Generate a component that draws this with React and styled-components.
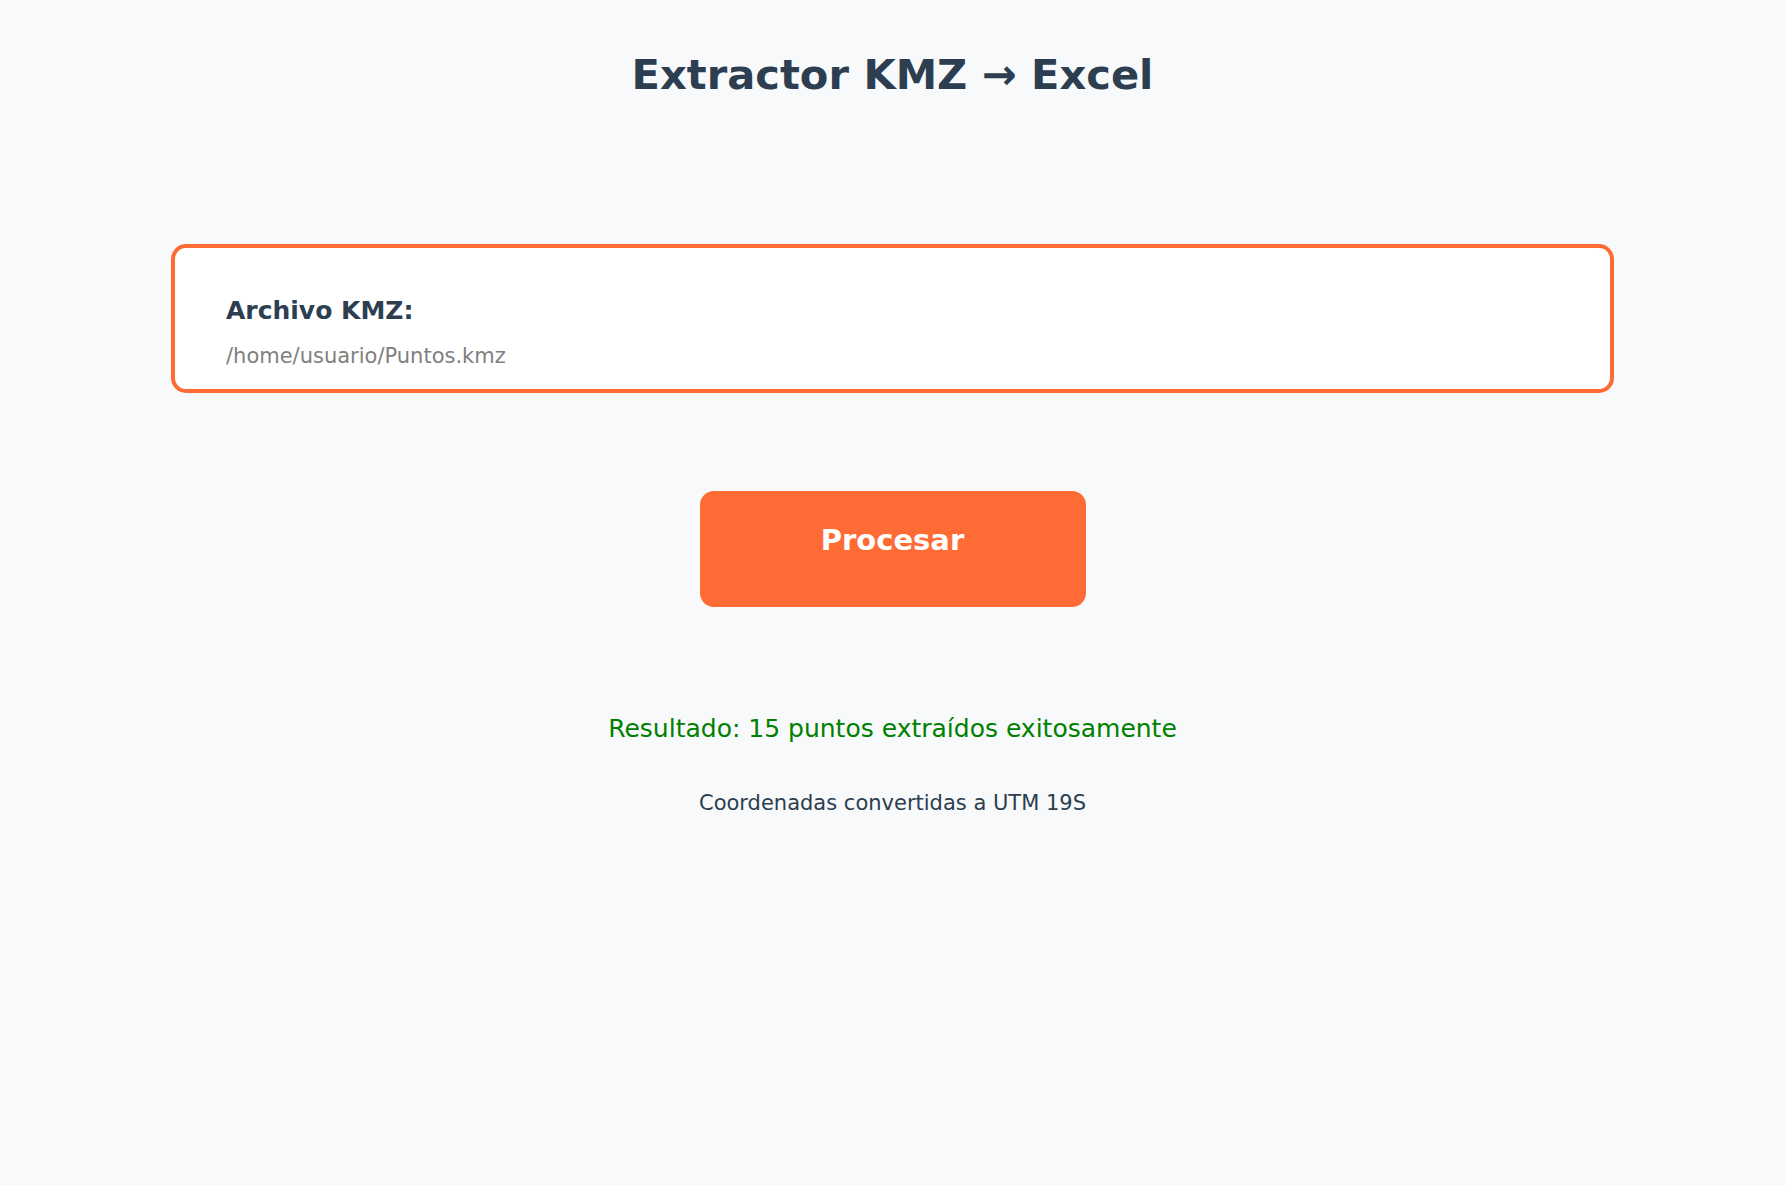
import React from 'react';
import styled, { createGlobalStyle } from 'styled-components';

const GlobalStyle = createGlobalStyle`
  html, body {
    margin: 0;
    padding: 0;
    background-color: #F8F9FA;
    font-family: "DejaVu Sans", "Liberation Sans", sans-serif;
  }
`;

const Page = styled.div`
  min-height: 100vh;
  display: flex;
  flex-direction: column;
  align-items: center;
  padding-top: 51px;
  box-sizing: border-box;
`;

const Title = styled.h1`
  margin: 0;
  font-size: 41.6px;
  line-height: 48px;
  font-weight: 700;
  color: #2C3E50;
`;

const FileCard = styled.div`
  box-sizing: border-box;
  width: 1443px;
  margin-top: 145px;
  padding: 48px 51px 20px;
  background-color: #FFFFFF;
  border: 4px solid #FF6B35;
  border-radius: 15px;
  display: flex;
  flex-direction: column;
  gap: 17px;
`;

const FieldLabel = styled.span`
  font-size: 25px;
  line-height: 30px;
  font-weight: 700;
  color: #2C3E50;
`;

const FilePath = styled.span`
  font-size: 21px;
  line-height: 26px;
  color: #808080;
`;

const ProcessButton = styled.button`
  box-sizing: border-box;
  width: 386px;
  height: 116px;
  margin-top: 98px;
  padding: 32px 0 0;
  display: flex;
  justify-content: center;
  align-items: flex-start;
  border: none;
  border-radius: 14px;
  background-color: #FF6B35;
  color: #FFFFFF;
  font-family: inherit;
  font-size: 29px;
  line-height: 34px;
  font-weight: 700;
  cursor: pointer;
`;

const Message = styled.p`
  margin: 0;
  margin-top: ${({ $gap }) => $gap}px;
  font-size: ${({ $size }) => $size}px;
  line-height: ${({ $size }) => $size + 5}px;
  color: ${({ $color }) => $color};
`;

const App = () => {
  return (
    <>
      <GlobalStyle />
      <Page>
        <Title>Extractor KMZ → Excel</Title>
        <FileCard>
          <FieldLabel>Archivo KMZ:</FieldLabel>
          <FilePath>/home/usuario/Puntos.kmz</FilePath>
        </FileCard>
        <ProcessButton>Procesar</ProcessButton>
        <Message $gap={107} $size={25} $color="#008000">
          Resultado: 15 puntos extraídos exitosamente
        </Message>
        <Message $gap={46} $size={21} $color="#2C3E50">
          Coordenadas convertidas a UTM 19S
        </Message>
      </Page>
    </>
  );
};

export default App;
